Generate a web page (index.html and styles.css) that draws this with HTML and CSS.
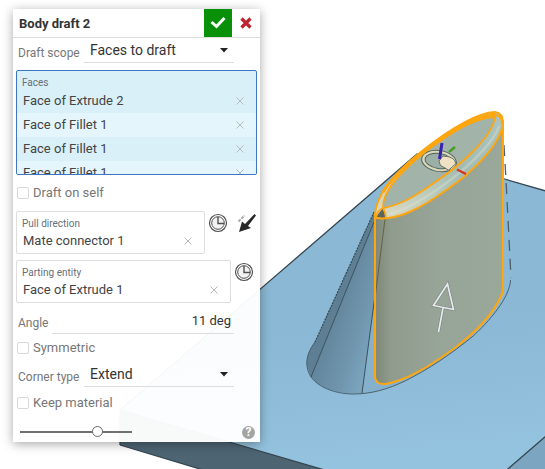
FILE: index.html
```html
<!DOCTYPE html>
<html lang="en">
<head>
<meta charset="utf-8">
<meta name="viewport" content="width=device-width, initial-scale=1">
<title>Body draft 2</title>
<link rel="stylesheet" href="styles.css">
</head>
<body>
<svg class="scene" viewBox="0 0 545 469" preserveAspectRatio="xMinYMin slice" aria-hidden="true">
  <defs>
    <linearGradient id="plate" x1="0" y1="0" x2="0.15" y2="1">
      <stop offset="0.6" stop-color="#8bb8d4"/><stop offset="1" stop-color="#94c3df"/>
    </linearGradient>
    <linearGradient id="cone" gradientUnits="userSpaceOnUse" x1="328" y1="330" x2="374" y2="345">
      <stop offset="0" stop-color="#62869c"/><stop offset="0.6" stop-color="#7096ae"/><stop offset="1" stop-color="#7ba4bd"/>
    </linearGradient>
    <linearGradient id="side" gradientUnits="userSpaceOnUse" x1="375" y1="0" x2="503" y2="0">
      <stop offset="0" stop-color="#7f8878"/><stop offset="0.12" stop-color="#8f9b8c"/><stop offset="0.5" stop-color="#97a598"/><stop offset="1" stop-color="#9aa89a"/>
    </linearGradient>
    <linearGradient id="rim" gradientUnits="userSpaceOnUse" x1="380" y1="216" x2="500" y2="118">
      <stop offset="0" stop-color="#dcd9c2"/><stop offset="0.35" stop-color="#b9cabb"/><stop offset="0.6" stop-color="#a3bbb3"/><stop offset="1" stop-color="#abc4bd"/>
    </linearGradient>
  </defs>
  <path d="M120 410 417 154 560 195V424L494 481 362 481Z" fill="url(#plate)"/>
  <path d="M120 410 362 481H240L120 445Z" fill="#4d6473"/>
  <path d="M494 481 560 424V481Z" fill="#7ca5c1"/>
  <path d="M120 445V410L417 154 560 195M120 410 362 481M120 445 240 481M494 481 560 424" fill="none" stroke="#344650" stroke-width="1.3"/>
  <path d="M374 212 315 342C309 350 306 358 307 366 309 386 335 394 353 394 372 394 388 389 405 381 429 369 451 354 472 337 489 322 510 297 510 280L506 180 440 200Z" fill="#86b1cc"/>
  <path d="M374 212 315 342C309 350 306 358 307 366L311 377 374 222Z" fill="#5e7f93"/>
  <path d="M374 222 311 377C322 391 343 394 362 393.500L385 222Z" fill="url(#cone)"/>
  <path d="M503 179 506 180 511 280C510 297 489 322 472 337V180Z" fill="#8bb8d4"/>
  <path d="M315 342C309 350 306 358 307 366 309 386 335 394 353 394 372 394 388 389 405 381 429 369 451 354 472 337 489 322 510 297 510.500 280" fill="none" stroke="#486271" stroke-width="1"/>
  <path d="M374 222 311 377M385 220 362 393" fill="none" stroke="#3c515e" stroke-width="1"/>
  <path d="M374 212 315 342" fill="none" stroke="#334852" stroke-width="1.200" stroke-dasharray="2 1"/>
  <path d="M504 145 506 180 511 278" fill="none" stroke="#4a5f6a" stroke-width="1.300" stroke-dasharray="11 8"/>
  <path d="M375 216V376Q375 385 386 384C408 380 431 365 452 350 474 334 493 315 502 294Q503 291 503 287V120L440 190Z" fill="url(#side)"/>
  <path d="M385 219 375.500 294" stroke="#646044" stroke-width="1"/>
  <path d="M376 218 375 212C378 192 397 171 422 151 445 133 474 113 495 112Q503 113 503 123C501 143 476 170 445 191 421 208 397 221 376 218Z" fill="url(#rim)"/>
  <path d="M383 208C382 190 405 168 425 152 447 135 474 117 495 117 492 139 456 168 438 180 420 193 402 205 383 208Z" fill="#a2b4aa"/>
  <path d="M388 214C420 208 490 155 499 126" fill="none" stroke="#dfe9dc" stroke-opacity=".35" stroke-width="2.500"/>
  <path d="M376 217 383 208 386 219Z" fill="#5d665c"/>
  <g transform="rotate(9 439 161)">
    <ellipse cx="439" cy="161" rx="17.500" ry="10.500" fill="#d7d8bd" stroke="#566459" stroke-width="1"/>
    <ellipse cx="439" cy="161" rx="14" ry="7.500" fill="#9cafa6" stroke="#566459" stroke-width="1"/>
    <path d="M439 161 442 155.500Q454 154 456 161L450 168.500 441 165Z" fill="#efe2c4" stroke="#566459" stroke-width=".8"/>
  </g>
  <path d="M375 216C375 195 397 171 422 151 445 133 474 113 495 112Q503 113 503 123C501 143 476 170 445 191 421 208 397 221 376 218Z" fill="none" stroke="#ffa50e" stroke-width="2"/>
  <path d="M383 208C382 190 405 168 425 152 447 135 474 117 495 117 492 139 456 168 438 180 420 193 402 205 383 208Q378 210 376 217M383 208Q386 213 386 219M493 115Q502 114 502 124" fill="none" stroke="#ffa50e" stroke-width="1.800"/>
  <path d="M383 192C392 177 407 164 423 152 446 134 470 118 495 114" fill="none" stroke="#ffa50e" stroke-width="3"/>
  <path d="M375 213V376Q375 385 386 384C408 380 431 365 452 350 474 334 493 315 502 294Q503 291 503 287V120" fill="none" stroke="#ffa50e" stroke-width="2"/>
  <path d="M442 143 439.500 159" stroke="#3822ac" stroke-width="3"/>
  <path d="M449 152 455 147" stroke="#42a020" stroke-width="2.400"/>
  <path d="M457 169.500 466 174" stroke="#d7321d" stroke-width="2"/>
  <path d="M438.500 332 443 308M447.500 284 433.500 305.500 453.500 309.500Z" fill="none" stroke="#76817a" stroke-width="2.800"/>
  <path d="M438.500 332 443 308M447.500 284 433.500 305.500 453.500 309.500Z" fill="none" stroke="#e9e9f0" stroke-width="1.700"/>
</svg>

<main class="dialog">
  <header class="head">
    <h1 class="title">Body draft 2</h1>
    <button class="accept" type="button" aria-label="Accept">
      <svg width="16" height="14" viewBox="0 0 16 14"><path d="M1.500 6 6.500 10.500 14.500 2" fill="none" stroke="#fff" stroke-width="3"/></svg>
    </button>
    <button class="cancel" type="button" aria-label="Cancel">
      <svg width="12" height="12" viewBox="0 0 12 12"><path d="M1.500 1.500 10.500 10.500M10.500 1.500 1.500 10.500" stroke="#bd2631" stroke-width="3.200"/></svg>
    </button>
  </header>
  <form class="form">
    <div class="row choice">
      <label class="label" for="scope">Draft scope</label>
      <div class="select">
        <select id="scope"><option>Faces to draft</option></select>
        <svg class="caret" width="8" height="5" viewBox="0 0 8 5"><path d="M0 0H8L4 4.500Z" fill="#222"/></svg>
      </div>
    </div>
    <section class="faces">
      <h2 class="caption">Faces</h2>
      <ul class="list">
        <li class="item">Face of Extrude 2<button class="remove" type="button" aria-label="Remove"><svg width="8" height="8" viewBox="0 0 8 8"><path d="M.5.5 7.500 7.500M7.500.5.500 7.500"/></svg></button></li>
        <li class="item">Face of Fillet 1<button class="remove" type="button" aria-label="Remove"><svg width="8" height="8" viewBox="0 0 8 8"><path d="M.5.5 7.500 7.500M7.500.5.500 7.500"/></svg></button></li>
        <li class="item">Face of Fillet 1<button class="remove" type="button" aria-label="Remove"><svg width="8" height="8" viewBox="0 0 8 8"><path d="M.5.5 7.500 7.500M7.500.5.500 7.500"/></svg></button></li>
        <li class="item">Face of Fillet 1<button class="remove" type="button" aria-label="Remove"><svg width="8" height="8" viewBox="0 0 8 8"><path d="M.5.5 7.500 7.500M7.500.5.500 7.500"/></svg></button></li>
      </ul>
    </section>
    <label class="check first"><input type="checkbox">Draft on self</label>
    <div class="pick">
      <section class="box">
        <h2 class="caption">Pull direction</h2>
        <div class="item">Mate connector 1<button class="remove" type="button" aria-label="Remove"><svg width="8" height="8" viewBox="0 0 8 8"><path d="M.5.5 7.500 7.500M7.500.5.500 7.500"/></svg></button></div>
      </section>
      <button class="tool" type="button" aria-label="Mate connector">
        <svg width="20" height="20" viewBox="0 0 20 20" fill="none" stroke="#505050"><circle cx="10" cy="10" r="8.500" stroke-width="1.200"/><circle cx="10" cy="10" r="6.300" fill="#f2f2f2" stroke-width="1"/><path d="M10 4V10.500H16" stroke-width="1.400"/></svg>
      </button>
      <button class="tool flip" type="button" aria-label="Flip direction">
        <svg width="20" height="20" viewBox="0 0 20 20"><path d="M2 19 5 8.500 8 11 17.500 1 19 2.500 11 13 14 15Z" fill="#282828"/><path d="M1.500 8.500 7.500 2.500" stroke="#aaa" stroke-width="2" stroke-dasharray="3 1"/></svg>
      </button>
    </div>
    <div class="pick single">
      <section class="box">
        <h2 class="caption">Parting entity</h2>
        <div class="item">Face of Extrude 1<button class="remove" type="button" aria-label="Remove"><svg width="8" height="8" viewBox="0 0 8 8"><path d="M.5.5 7.500 7.500M7.500.5.500 7.500"/></svg></button></div>
      </section>
      <button class="tool" type="button" aria-label="Mate connector">
        <svg width="20" height="20" viewBox="0 0 20 20" fill="none" stroke="#505050"><circle cx="10" cy="10" r="8.500" stroke-width="1.200"/><circle cx="10" cy="10" r="6.300" fill="#f2f2f2" stroke-width="1"/><path d="M10 4V10.500H16" stroke-width="1.400"/></svg>
      </button>
    </div>
    <div class="row angle">
      <label class="label" for="angle">Angle</label>
      <input class="number" id="angle" type="text" value="11 deg">
    </div>
    <label class="check"><input type="checkbox">Symmetric</label>
    <div class="row choice corner">
      <label class="label" for="corner">Corner type</label>
      <div class="select">
        <select id="corner"><option>Extend</option></select>
        <svg class="caret" width="8" height="5" viewBox="0 0 8 5"><path d="M0 0H8L4 4.500Z" fill="#222"/></svg>
      </div>
    </div>
    <label class="check"><input type="checkbox">Keep material</label>
    <footer class="foot">
      <input class="slider" type="range" min="0" max="100" value="71" aria-label="Preview opacity">
      <button class="help" type="button" aria-label="Help">?</button>
    </footer>
  </form>
</main>
</body>
</html>
```
FILE: styles.css
```css
* { box-sizing: border-box; }
body {
  margin: 0;
  min-height: 100vh;
  padding: 9px 13px;
  overflow: hidden;
  background: #fff;
  color: #444;
  font: 13px/24px Roboto, "Liberation Sans", sans-serif;
}
button, input, select { font: inherit; color: inherit; }
button { padding: 0; border: 0; background: none; display: grid; place-items: center; }
h1, h2, ul { margin: 0; padding: 0; list-style: none; }

.scene { position: absolute; inset: 0; width: 100%; height: 100%; }
.dialog {
  position: relative;
  width: 247px;
  background: rgba(255, 255, 255, .96);
  box-shadow: 0 2px 10px rgba(0, 0, 0, .35);
}
.head { display: flex; height: 29px; border-bottom: 1px solid #ddd; }
.title { flex: 1; padding-left: 6px; font-size: 13px; line-height: 29px; color: #333; }
.accept { width: 28px; background: #089108; }
.cancel { width: 28px; }

.form { padding: 0 3px; }
.row { display: flex; gap: 4px; height: 25px; margin-right: 23px; padding-left: 2px; }
.label { color: #777; font-size: 12px; line-height: 30px; white-space: nowrap; }
.choice .label { min-width: 62px; }
.select { position: relative; flex: 1; border-bottom: 1px solid #ddd; }
.select select {
  width: 100%;
  height: 24px;
  padding: 0 6px;
  border: 0;
  background: none;
  appearance: none;
  color: #333;
  font-size: 14px;
}
.caret { position: absolute; right: 6px; top: 10px; }

.faces {
  height: 105px;
  margin-top: 7px;
  overflow: hidden;
  border: 1px solid #3f75c4;
  border-radius: 2px;
  background: #d9f0f9;
}
.caption { padding: 5px 5px 0; color: #666f78; font-size: 10px; font-weight: 400; line-height: 13px; }
.item { display: flex; align-items: center; justify-content: space-between; padding: 0 12px 0 6px; height: 24px; }
.list .item:nth-child(even) { background: #e4f5fb; }
.remove svg { display: block; stroke: #b4bcc0; }

.check { display: flex; align-items: center; gap: 4px; height: 24px; color: #777; padding-left: 1px; }
.check input {
  width: 12px;
  height: 12px;
  margin: 0;
  border: 1px solid #d8d8d8;
  border-radius: 2px;
  background: #fff;
  appearance: none;
}
.check.first { margin: 6px 0; }

.pick { display: flex; gap: 3px; margin-bottom: 6px; }
.pick.single { padding-right: 3px; }
.box { flex: 1; height: 43px; border: 1px solid #ddd; border-radius: 2px; }
.box .item { height: 22px; }
.tool { width: 20px; height: 24px; }
.tool.flip { margin-left: 6px; }

.number {
  flex: 1;
  min-width: 0;
  padding: 0 3px;
  border: 0;
  border-bottom: 1px solid #ddd;
  background: none;
  color: #333;
  text-align: right;
}
.angle { margin-bottom: 2px; }
.angle .label { line-height: 28px; }
.corner { margin-top: 2px; margin-bottom: 4px; }

.foot { display: flex; align-items: center; justify-content: space-between; height: 27px; padding: 7px 2px 0 4px; }
.slider { width: 112px; height: 12px; margin: 0; background: none; appearance: none; }
.slider::-webkit-slider-runnable-track { height: 2px; background: #707070; }
.slider::-webkit-slider-thumb {
  width: 11px;
  height: 11px;
  margin-top: -5px;
  border: 1px solid #666;
  border-radius: 50%;
  background: #fff;
  appearance: none;
}
.help {
  width: 13px;
  height: 13px;
  border-radius: 50%;
  background: #a4a4a4;
  color: #fff;
  font-size: 12px;
  font-weight: 700;
  line-height: 13px;
}
```
